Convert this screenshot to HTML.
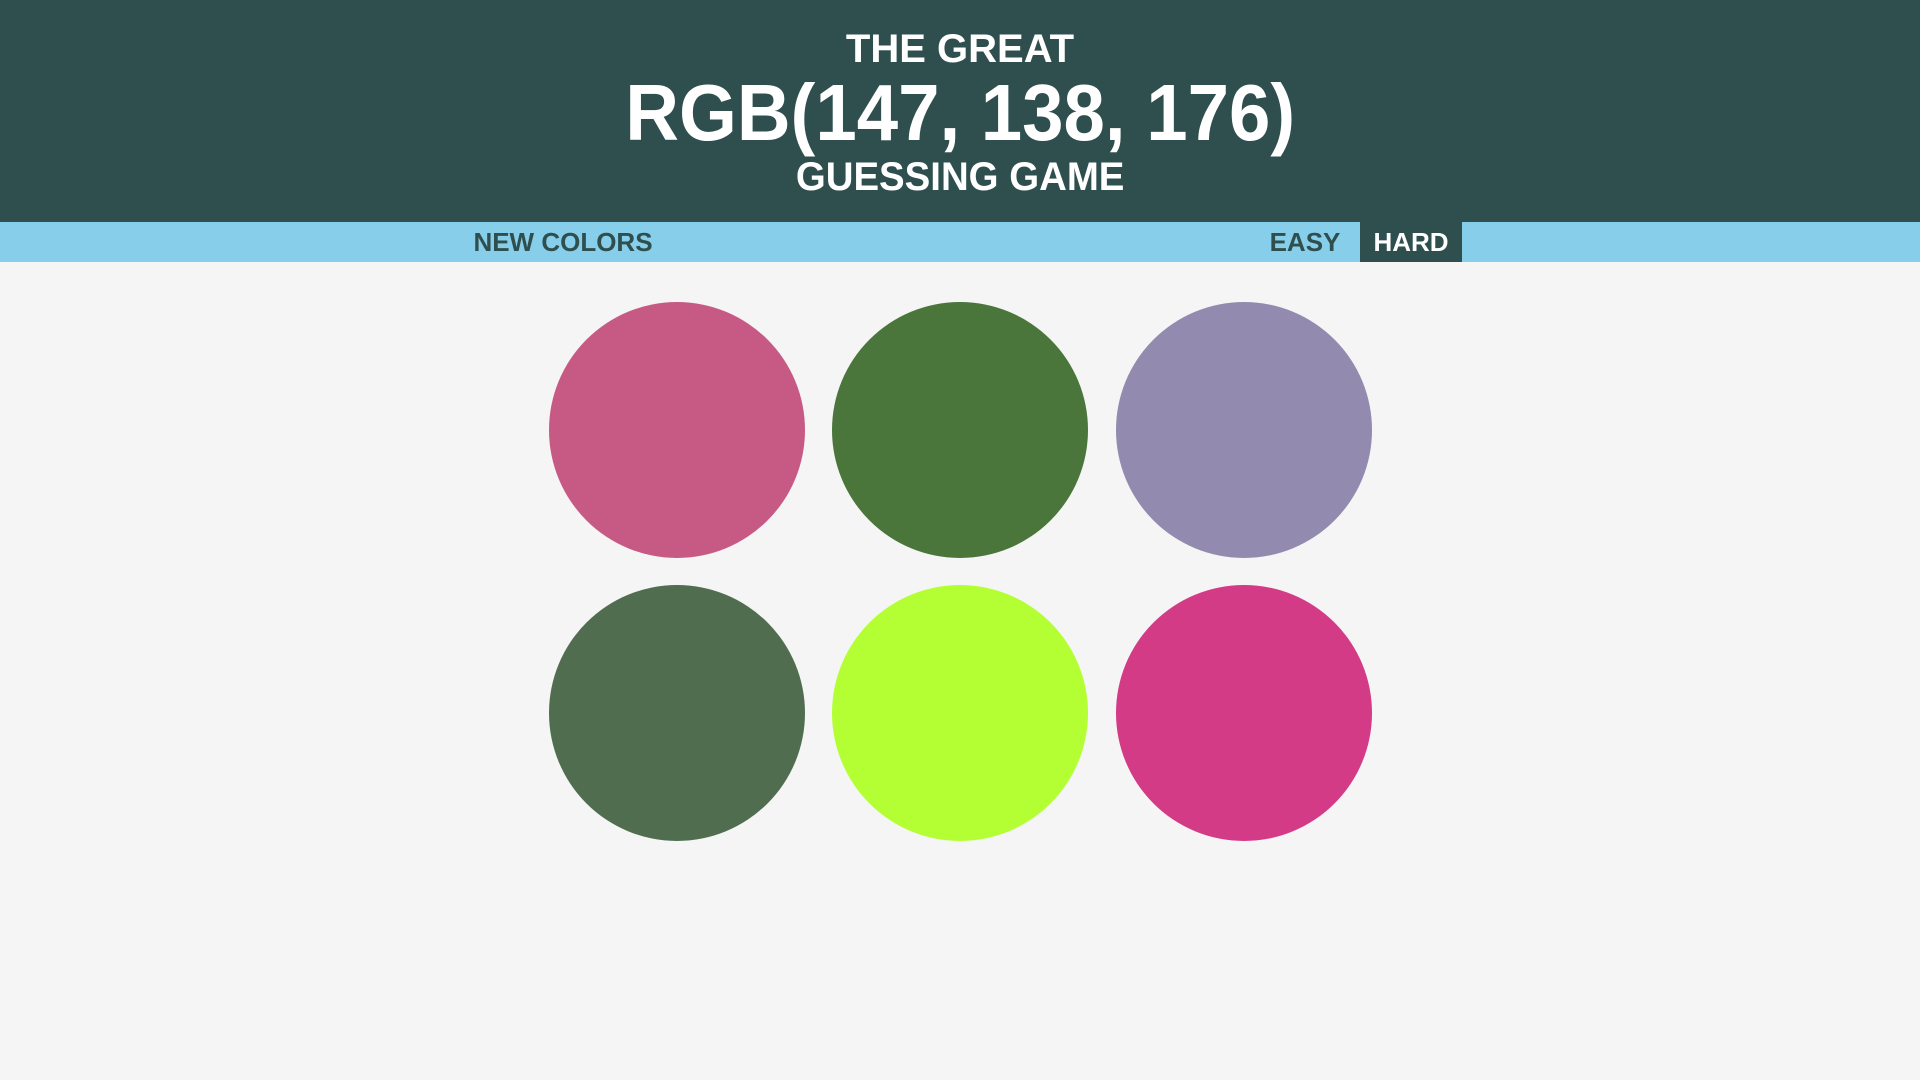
<!DOCTYPE html>
<html><head><meta charset="utf-8"><style>
html,body{margin:0;padding:0;width:1920px;height:1080px;background:#f5f5f5;overflow:hidden;font-family:"Liberation Sans",sans-serif}
.h{position:absolute;left:0;top:0;width:1920px;height:222px;background:#2f4f4f;color:#fff}
.t{position:absolute;left:0;width:1920px;text-align:center;font-family:"Liberation Sans",sans-serif;font-weight:bold;white-space:nowrap}
.t span{display:inline-block}
.n{position:absolute;left:0;top:222px;width:1920px;height:40px;background:#87ceeb}
.b{position:absolute;top:0;height:40px;line-height:40px;font-weight:bold;font-size:26px;color:#2f4f4f;text-align:center}
.c{position:absolute;width:256px;height:256px;border-radius:50%}
</style></head><body>
<div class="h">
<div class="t" style="top:26px;font-size:40px;line-height:46px"><span>THE GREAT</span></div>
<div class="t" style="top:70px;font-size:80px;line-height:86px"><span style="transform:scaleX(0.93)">RGB(147, 138, 176)</span></div>
<div class="t" style="top:154px;font-size:40px;line-height:46px"><span style="transform:scaleX(0.96)">GUESSING GAME</span></div>
</div>
<div class="n">
<div class="b" style="left:463px;width:200px">NEW COLORS</div>
<div class="b" style="left:1255px;width:100px">EASY</div>
<div class="b" style="left:1360px;width:102px;background:#2f4f4f;color:#fff">HARD</div>
</div>
<div class="c" style="left:549px;top:302px;background:#c75a84"></div>
<div class="c" style="left:832px;top:302px;background:#4b763b"></div>
<div class="c" style="left:1116px;top:302px;background:#938ab0"></div>
<div class="c" style="left:549px;top:585px;background:#506e4f"></div>
<div class="c" style="left:832px;top:585px;background:#b3ff33"></div>
<div class="c" style="left:1116px;top:585px;background:#d43b86"></div>
</body></html>
